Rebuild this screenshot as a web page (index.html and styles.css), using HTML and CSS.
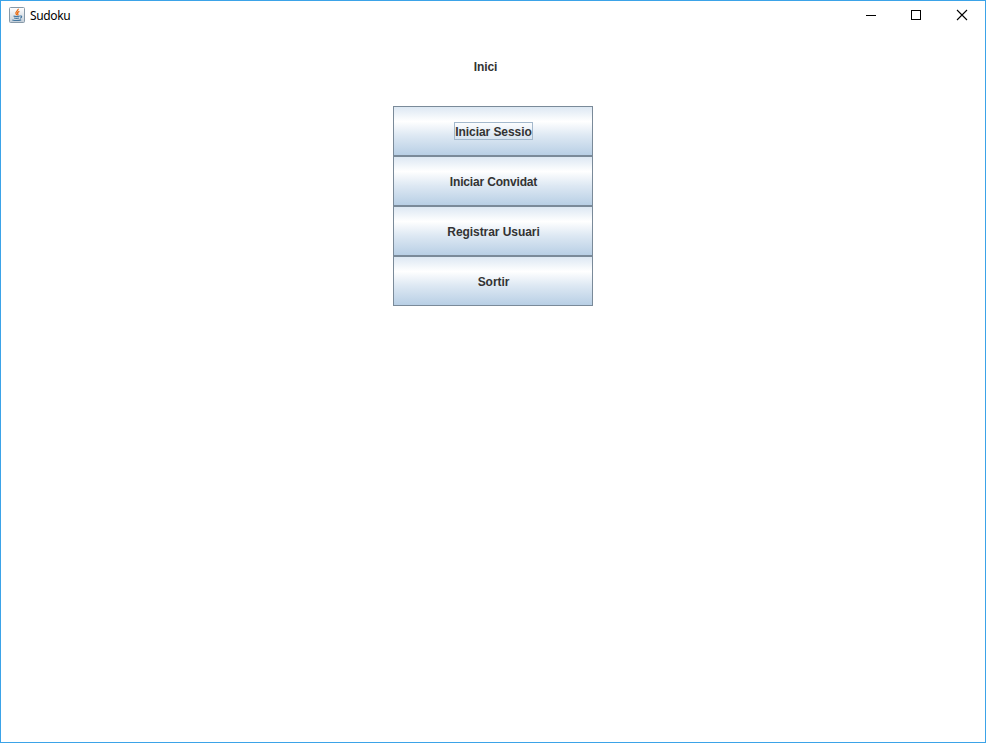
FILE: index.html
```html
<!DOCTYPE html>
<html lang="ca">
<head>
<meta charset="utf-8">
<title>Sudoku</title>
<link rel="stylesheet" href="styles.css">
</head>
<body>
<div class="window">
  <header class="titlebar">
    <svg class="app-icon" width="16" height="16" viewBox="0 0 16 16">
      <defs>
        <linearGradient id="tile" x1="0" y1="0" x2="0" y2="1">
          <stop offset="0" stop-color="#fff"/>
          <stop offset="1" stop-color="#c3ced8"/>
        </linearGradient>
      </defs>
      <rect x=".5" y=".5" width="15" height="15" rx="1" fill="url(#tile)" stroke="#8799a8"/>
      <path d="M9.200 1.800c.5 1.700-3.300 2.700-2.200 4.900.3.600.8 1 .8 1.500M10.400 4.300c-1.900 1-2.400 1.700-1.500 2.700.3.400 0 .9-.4 1.300" fill="none" stroke="#ea6a10" stroke-width="1.300"/>
      <path d="M4.500 9c1.500.5 4.500.5 6.300 0M5.100 11c1.500.4 3.500.4 5 0M3.300 13c2.500.6 6.500.6 8.900-.1M11 9c2.300-.4 2.100 1.600.1 2.200" fill="none" stroke="#4577a0" stroke-width="1.100"/>
    </svg>
    <span class="title">Sudoku</span>
    <div class="controls">
      <svg width="45" height="29" viewBox="0 0 45 29"><path d="M16 14.500h10" stroke="#000"/></svg>
      <svg width="45" height="29" viewBox="0 0 45 29"><rect x="16.500" y="9.500" width="9" height="9" fill="none" stroke="#000"/></svg>
      <svg width="45" height="29" viewBox="0 0 45 29"><path d="M17 9l10 10M27 9l-10 10" stroke="#000" stroke-width="1.100"/></svg>
    </div>
  </header>
  <main class="content">
    <h1 class="heading">Inici</h1>
    <nav class="menu">
      <button class="item"><span class="label focused">Iniciar Sessio</span></button>
      <button class="item"><span class="label tight">Iniciar Convidat</span></button>
      <button class="item"><span class="label">Registrar Usuari</span></button>
      <button class="item"><span class="label">Sortir</span></button>
    </nav>
  </main>
</div>
</body>
</html>
```
FILE: styles.css
```css
* { box-sizing: border-box; }
body { margin: 0; background: #fff; }
.window {
  height: 743px;
  border: 1px solid #3ba3e8;
  background: #fff;
}
.titlebar {
  display: flex;
  height: 30px;
  padding-left: 8px;
}
.app-icon { margin-top: 6px; }
.title {
  margin-left: 5px;
  font: 12px/29px "Noto Sans", sans-serif;
  letter-spacing: -0.35px;
  color: #000;
}
.controls { display: flex; margin-left: auto; }
.content {
  display: flex;
  flex-direction: column;
  align-items: center;
  font: bold 12px/16px "Liberation Sans", Arial, sans-serif;
  letter-spacing: -0.06px;
  color: #333;
}
.heading {
  margin: 28px 15px 0 0;
  font: inherit;
}
.menu {
  display: flex;
  flex-direction: column;
  width: 200px;
  margin-top: 31px;
}
.item {
  display: flex;
  align-items: center;
  justify-content: center;
  height: 50px;
  padding: 0 0 0 1px;
  border: 1px solid #7a8a99;
  border-radius: 0;
  background: linear-gradient(#dde8f3, #fff 30%, #dde8f3 60%, #b8cfe5);
  font: inherit;
  letter-spacing: inherit;
  color: inherit;
}
.label {
  padding-top: 2px;
  border: 1px solid transparent;
  line-height: 14px;
}
.tight { letter-spacing: -0.17px; }
.focused {
  width: 79px;
  border-color: #a3b8cc;
  white-space: nowrap;
}
```
